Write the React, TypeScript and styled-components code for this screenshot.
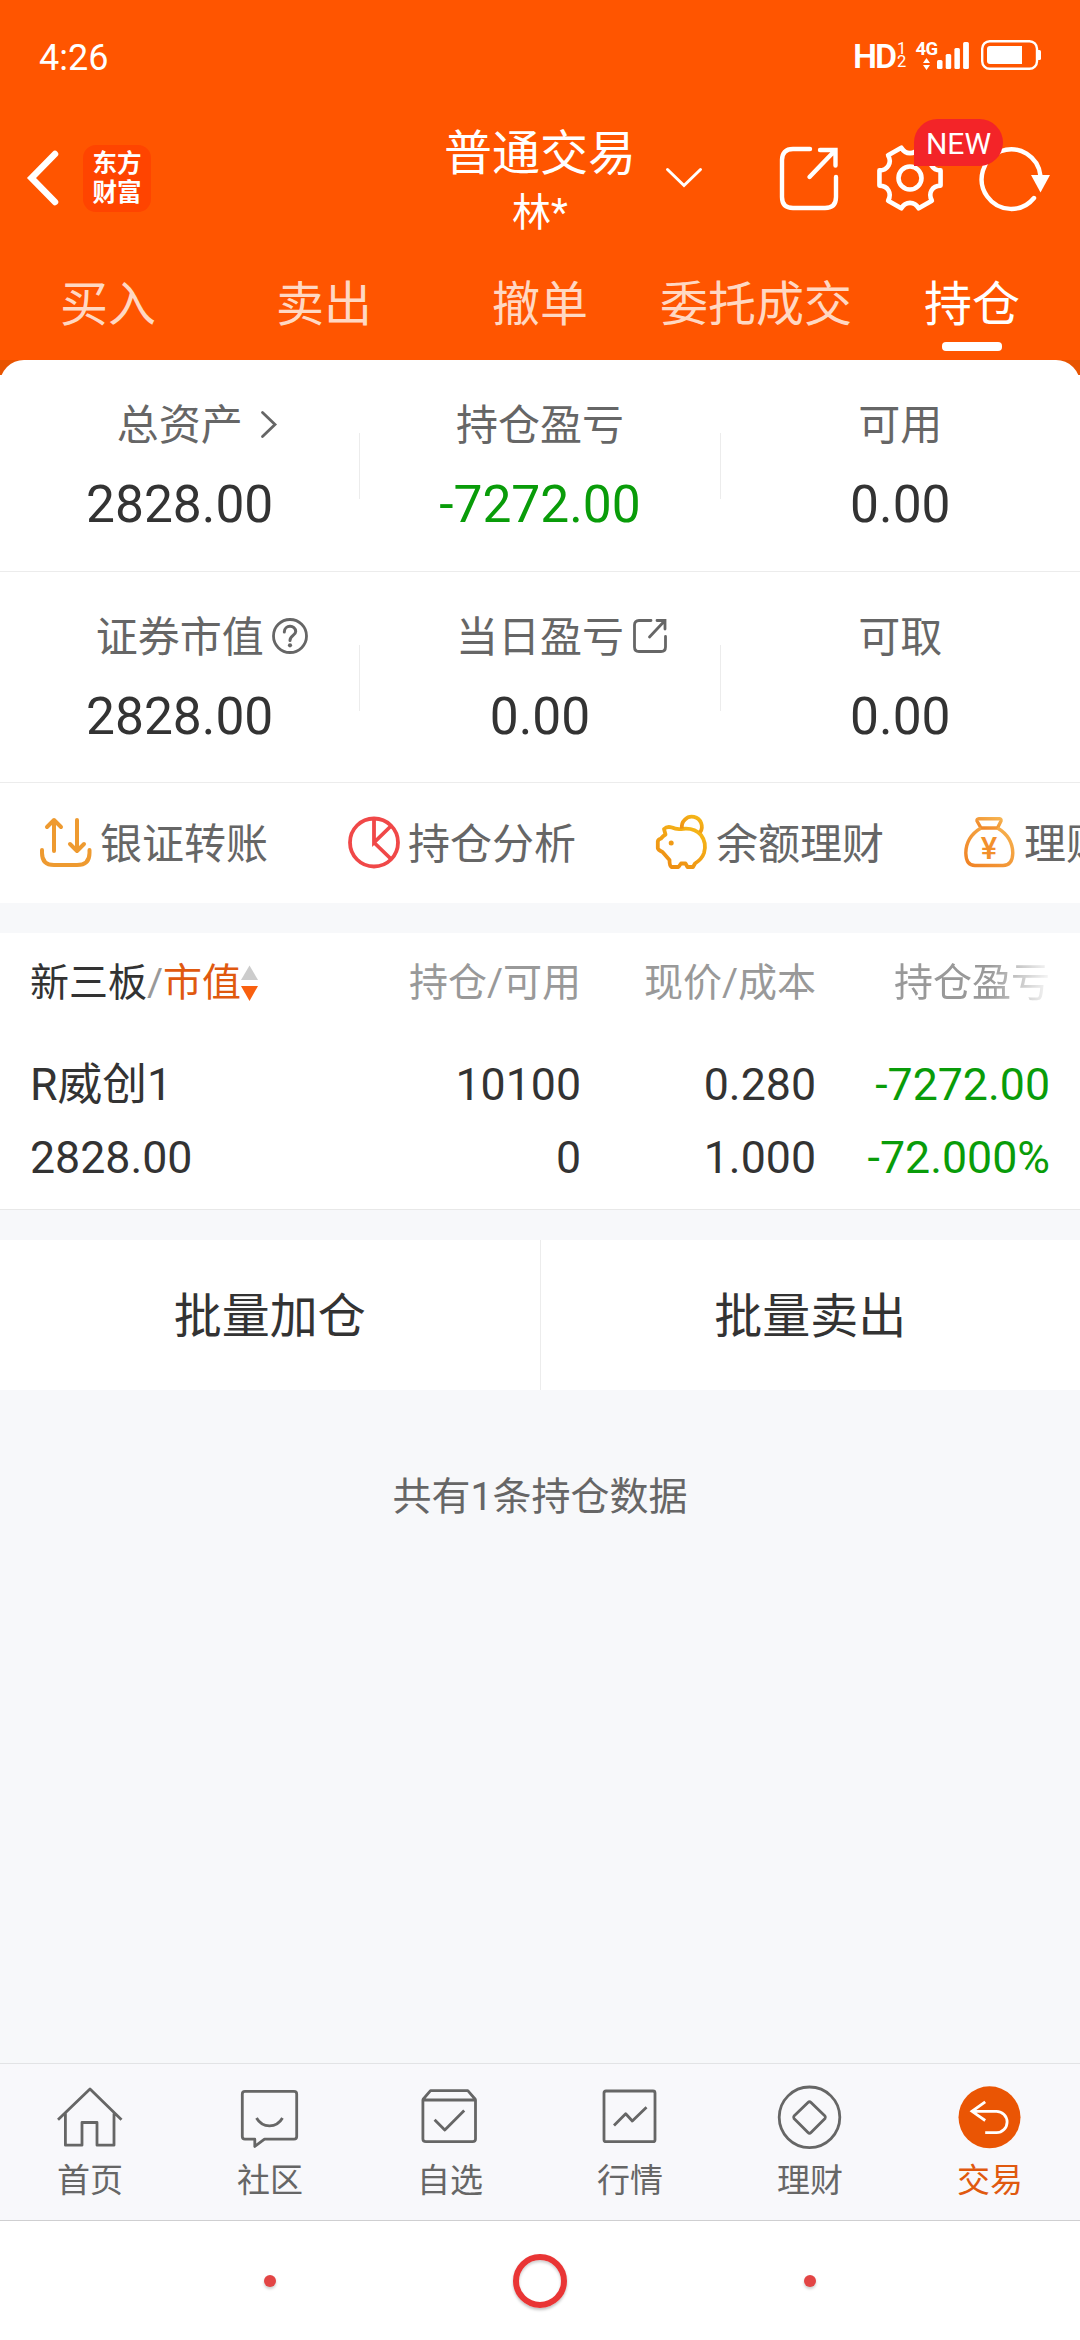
import React from 'react';
import styled, { createGlobalStyle } from 'styled-components';

const GlobalStyle = createGlobalStyle`
  * { box-sizing: border-box; }
  body {
    margin: 0;
    background: #f7f8fa;
    font-family: Roboto, "Noto Sans CJK SC", sans-serif;
    color: #333;
  }
  svg { display: block; flex: none; overflow: visible; }
`;

const Screen = styled.div`
  width: 1080px;
  height: 2340px;
  display: flex;
  flex-direction: column;
  overflow: hidden;
  background: #f7f8fa;
`;

/* ---------- header ---------- */

const Header = styled.header`
  height: 360px;
  background: #ff5500;
  color: #fff;
`;

const StatusBar = styled.div`
  height: 112px;
  padding: 0 39px 0 39px;
  display: flex;
  align-items: center;
  justify-content: space-between;
`;

const Clock = styled.span`
  font-size: 36px;
  line-height: 42px;
  padding-top: 3px;
`;

const StatusIcons = styled.div`
  display: flex;
  align-items: flex-start;
  height: 32px;
`;

const HdMark = styled.span`
  font-size: 34px;
  line-height: 32px;
  font-weight: 600;
  letter-spacing: -2px;
  width: 44px;
`;

const SimSlots = styled.span`
  display: flex;
  flex-direction: column;
  font-size: 16.5px;
  line-height: 12.5px;
  width: 19px;
  padding-top: 3px;
`;

const Network = styled.span`
  width: 21px;
  font-size: 18.5px;
  line-height: 18px;
  font-weight: 700;
  letter-spacing: -0.5px;
  display: flex;
  flex-direction: column;
  align-items: center;
`;

const TitleBar = styled.div`
  height: 132px;
  display: grid;
  grid-template-columns: 1fr auto 1fr;
  align-items: center;
`;

const TitleLeft = styled.div`
  display: flex;
  align-items: center;
  gap: 24px;
  padding-left: 27px;
`;

const AppLogo = styled.div`
  width: 68px;
  height: 67px;
  padding: 2px 9px 0;
  border-radius: 13px;
  background: #ff4400;
  font-family: "Noto Sans CJK SC", sans-serif;
  font-size: 24.5px;
  line-height: 29px;
  font-weight: 700;
  text-align: center;
  word-break: break-all;
`;

const TitleText = styled.div`
  display: flex;
  flex-direction: column;
  align-items: center;
  gap: 6px;
  padding-top: 4px;
`;

const Title = styled.h1`
  margin: 0;
  font-size: 48px;
  line-height: 60px;
  font-weight: 400;
`;

const Account = styled.span`
  font-size: 39px;
  line-height: 46px;
`;

const TitleRight = styled.div`
  display: flex;
  align-items: center;
  padding: 0 30px;
`;

const Actions = styled.div`
  display: flex;
  gap: 36px;
  margin-left: auto;
`;

const BadgeAnchor = styled.div`
  position: relative;
`;

const NewBadge = styled.span`
  position: absolute;
  z-index: 1;
  left: 38px;
  top: -27px;
  width: 89px;
  height: 47px;
  border-radius: 24px 24px 24px 0;
  background: #f32428;
  font-size: 30px;
  line-height: 49px;
  text-align: center;
`;

const Tabs = styled.nav`
  display: grid;
  grid-template-columns: repeat(5, 1fr);
  height: 116px;
`;

const Tab = styled.div<{ $active?: boolean }>`
  display: flex;
  flex-direction: column;
  align-items: center;
  padding-top: 29px;
  font-size: 48px;
  line-height: 64px;
  white-space: nowrap;
  color: ${(p) => (p.$active ? '#fff' : '#ffd8c3')};
`;

const TabMark = styled.span`
  width: 60px;
  height: 9px;
  margin-top: 5px;
  border-radius: 4px;
  background: #fff;
`;

/* ---------- asset summary ---------- */

const SummaryBack = styled.div`
  background: linear-gradient(#e85400 15px, #fff 15px);
`;

const Summary = styled.section`
  background: #fff;
  border-radius: 24px 24px 0 0;
`;

const StatRow = styled.div<{ $height: number }>`
  display: flex;
  height: ${(p) => p.$height}px;
  border-bottom: 1px solid #ececec;
`;

const Stat = styled.div`
  flex: 1;
  display: flex;
  flex-direction: column;
  gap: 24px;
  padding-top: 41px;
`;

const StatDivider = styled.span`
  width: 1px;
  height: 66px;
  margin-top: 73px;
  background: #ececec;
`;

const StatLabel = styled.div`
  display: grid;
  grid-template-columns: 1fr auto 1fr;
  align-items: center;
  font-size: 42px;
  line-height: 50px;
  height: 50px;
  color: #666;
`;

const LabelIcon = styled.span<{ $gap: number }>`
  grid-column: 3;
  padding-left: ${(p) => p.$gap}px;
  padding-bottom: 4px;
`;

const LabelText = styled.span`
  grid-column: 2;
`;

const StatValue = styled.div<{ $loss?: boolean }>`
  font-size: 51.5px;
  line-height: 60px;
  text-align: center;
  color: ${(p) => (p.$loss ? '#099c09' : '#333')};
`;

const QuickRow = styled.div`
  display: flex;
  height: 120px;
  padding-left: 40px;
  overflow: hidden;
`;

const Quick = styled.div`
  flex: none;
  width: 308px;
  display: flex;
  align-items: center;
  gap: 8px;
  font-size: 42px;
  line-height: 52px;
  color: #666;
  white-space: nowrap;
`;

const QuickLabel = styled.span`
  padding-top: 4px;
`;

/* ---------- holdings ---------- */

const Holdings = styled.section`
  margin-top: 30px;
  height: 277px;
  background: #fff;
  border-bottom: 1px solid #e8e8e8;
`;

const HoldingGrid = styled.div`
  display: grid;
  grid-template-columns: 316px 235px 235px 234px;
  padding: 0 30px;
  white-space: nowrap;
`;

const HoldingHead = styled(HoldingGrid)`
  height: 99px;
  align-items: center;
  font-size: 39px;
  line-height: 50px;
  color: #999;
`;

const HoldingBody = styled(HoldingGrid)`
  padding-top: 17px;
  font-size: 44.7px;
  line-height: 73px;
`;

const Cell = styled.div<{ $right?: boolean; $loss?: boolean }>`
  text-align: ${(p) => (p.$right ? 'right' : 'left')};
  color: ${(p) => (p.$loss ? '#099c09' : 'inherit')};
`;

const FadedCell = styled(Cell)`
  mask-image: linear-gradient(to right, #000 74%, transparent 102%);
`;

const SortCell = styled.div`
  display: flex;
  align-items: center;
`;

const Board = styled.span`
  color: #333;
`;

const SortKey = styled.span`
  color: #e0590f;
`;

const BatchRow = styled.div`
  margin-top: 30px;
  height: 150px;
  display: flex;
  background: #fff;
`;

const BatchButton = styled.button`
  flex: 1;
  border: 0;
  padding: 3px 0 0;
  background: none;
  font-family: inherit;
  font-size: 48px;
  line-height: 60px;
  color: #333;
  & + & { border-left: 1px solid #ececec; }
`;

const Footnote = styled.p`
  margin: 82px 0 0;
  font-size: 39px;
  line-height: 50px;
  text-align: center;
  color: #666;
`;

/* ---------- bottom ---------- */

const BottomBar = styled.nav`
  margin-top: auto;
  height: 158px;
  display: grid;
  grid-template-columns: repeat(6, 1fr);
  background: #f8f8fb;
  border-top: 1px solid #e2e3e5;
  border-bottom: 1px solid #cfcfd1;
`;

const BottomItem = styled.div<{ $active?: boolean }>`
  display: flex;
  flex-direction: column;
  align-items: center;
  gap: 11px;
  padding-top: 20px;
  font-size: 33px;
  line-height: 40px;
  color: ${(p) => (p.$active ? '#e0590f' : '#666')};
`;

const SystemNav = styled.div`
  height: 119px;
  display: flex;
  align-items: center;
  justify-content: space-between;
  padding: 0 264px;
  background: #fff;
`;

const Dot = styled.span`
  width: 12px;
  height: 12px;
  margin-top: 1px;
  border-radius: 50%;
  background: #e34545;
  box-shadow: 0 2px 3px rgba(0, 0, 0, 0.2);
`;

const HomeRing = styled.span`
  width: 54px;
  height: 54px;
  border: 6px solid #e93535;
  border-radius: 50%;
  box-shadow: 0 2px 3px rgba(0, 0, 0, 0.25), inset 0 2px 3px rgba(0, 0, 0, 0.2);
`;

/* ---------- icons ---------- */

const gearPath = (() => {
  const point = (deg: number, r: number) => {
    const a = (deg * Math.PI) / 180;
    return `${(34 + r * Math.cos(a)).toFixed(2)} ${(32 + r * Math.sin(a)).toFixed(2)}`;
  };
  let d = `M${point(-14, 31.5)}`;
  for (let k = 0; k < 6; k += 1) {
    const c = k * 60;
    d += `L${point(c + 14, 31.5)}C${point(c + 19, 23.5)} ${point(c + 41, 23.5)} ${point(c + 46, 31.5)}`;
  }
  return `${d}Z`;
})();

const BackIcon = () => (
  <svg width="32" height="56" viewBox="0 0 32 56" fill="none" stroke="#fff" strokeWidth="6.500" strokeLinecap="round">
    <path d="M28 4 4.500 28 28 52" />
  </svg>
);

const DropIcon = () => (
  <svg width="36" height="20" viewBox="0 0 36 20" fill="none" stroke="#fff" strokeWidth="3" strokeLinecap="round">
    <path d="M1.5 1.5 18 17.5 34.5 1.5" />
  </svg>
);

const ShareIcon = () => (
  <svg width="61" height="64" viewBox="0 0 61 64" fill="none" stroke="#fff" strokeWidth="4.4" strokeLinecap="round">
    <path d="M31 3H14Q3 3 3 14V51Q3 62 14 62H46Q57 62 57 51V31M41 4H56.5V19.500M56 4.500 30.500 31" />
  </svg>
);

const GearIcon = () => (
  <svg width="68" height="64" viewBox="0 0 68 64" fill="none" stroke="#fff" strokeWidth="4.6" strokeLinejoin="round">
    <path d={gearPath} />
    <circle cx="34" cy="32" r="11.500" />
  </svg>
);

const RefreshIcon = () => (
  <svg width="70" height="64" viewBox="0 0 70 64" fill="none" stroke="#fff" strokeWidth="4.4" strokeLinecap="round">
    <path d="M60.500 30A29.500 29.800 0 1 0 54 52" />
    <path d="M51 29H70L60.500 46.500Z" fill="#fff" stroke="none" />
  </svg>
);

const DataArrows = () => (
  <svg width="7" height="12" viewBox="0 0 7 12" fill="#fff">
    <path d="M3.500 0 7 5H0ZM3.500 12 0 7H7Z" />
  </svg>
);

const SignalBars = () => (
  <svg width="44" height="32" viewBox="0 0 44 32" fill="#fff">
    <rect x="0" y="20" width="5.500" height="9" rx="1.500" />
    <rect x="8.700" y="14" width="5.500" height="15" rx="1.500" />
    <rect x="17.400" y="8" width="5.500" height="21" rx="1.500" />
    <rect x="26.100" y="2" width="5.800" height="27" rx="1.500" />
  </svg>
);

const BatteryIcon = () => (
  <svg width="60" height="30" viewBox="0 0 60 30">
    <rect x="1.200" y="1.200" width="54.800" height="27.600" rx="7.500" fill="none" stroke="#fff" strokeWidth="2.400" />
    <path d="M9 6H41V24H9Q6 24 6 21V9Q6 6 9 6Z" fill="#fff" />
    <path d="M57 10h1.500q1.500 0 1.500 1.500v7q0 1.500-1.500 1.500H57Z" fill="#fff" />
  </svg>
);

const ChevronIcon = () => (
  <svg width="16" height="27" viewBox="0 0 16 27" fill="none" stroke="#666" strokeWidth="2.800" strokeLinecap="round">
    <path d="M1.500 1.500 14 13.500 1.500 25.500" />
  </svg>
);

const HelpIcon = () => (
  <svg width="36" height="36" viewBox="0 0 36 36" fill="none" stroke="#666" strokeWidth="2.800" strokeLinecap="round">
    <circle cx="18" cy="18" r="16.500" />
    <path d="M12.300 14C12.300 6.500 23.700 6.500 23.700 13.500C23.700 17.500 18 17.500 18 22.500" strokeWidth="3" />
    <circle cx="18" cy="27.300" r="2.100" fill="#666" stroke="none" />
  </svg>
);

const OpenIcon = () => (
  <svg width="34" height="34" viewBox="0 0 34 34" fill="none" stroke="#666" strokeWidth="2.800" strokeLinecap="round">
    <path d="M18 1.500H6Q1.500 1.500 1.500 6V28Q1.500 32.500 6 32.500H28Q32.500 32.500 32.500 28V17.500M24 1.500H32V10M31.500 2 16.500 18" />
  </svg>
);

const TransferIcon = () => (
  <svg width="52" height="52" viewBox="0 0 52 52" fill="none" stroke="#ee9a30" strokeWidth="4" strokeLinecap="round" strokeLinejoin="round">
    <path d="M14 34V3M7 10 14 3 21 10M37 3V34M30 27 37 34 44 27M2 33V36Q2 48 14 48H37Q49.500 48 49.500 36V33" />
  </svg>
);

const AnalysisIcon = () => (
  <svg width="52" height="52" viewBox="0 0 52 52" fill="none" stroke="#f04848" strokeWidth="3.800">
    <circle cx="26" cy="25.500" r="24" />
    <path d="M26 1.500V25.500L43 9M26 25.500 43 42" />
  </svg>
);

const PiggyIcon = () => (
  <svg width="52" height="52" viewBox="0 0 52 52" fill="none" stroke="url(#pig)" strokeWidth="3.800" strokeLinejoin="round">
    <defs>
      <linearGradient id="pig" x1="1" y1="0" x2="0.300" y2="1">
        <stop offset="0" stopColor="#f6bb18" />
        <stop offset="1" stopColor="#ee8f14" />
      </linearGradient>
    </defs>
    <path d="M8 12Q11 9 16 10.500Q20 12.500 25 12Q38 10 45 18Q51 26 48 36Q46 42 39 46.500L37 50H31.500L29.500 46.500H25L22.500 50H15.500Q13.500 49 13.500 43L6.500 35Q2 33 1.800 31V24.500Q2 22.500 5 21.500Q7 19 9.500 17.500Z" />
    <path d="M26 11.500A10 10 0 1 1 44 15.500" />
    <circle cx="15.200" cy="26" r="2.500" fill="#f09a15" stroke="none" />
  </svg>
);

const YenMark = styled.text`
  font-family: Roboto, sans-serif;
  font-size: 31px;
  font-weight: 500;
`;

const BagIcon = () => (
  <svg width="52" height="52" viewBox="0 0 52 52" fill="none" stroke="url(#bag)" strokeWidth="3.400" strokeLinejoin="round">
    <defs>
      <linearGradient id="bag" x1="1" y1="0" x2="0" y2="1">
        <stop offset="0" stopColor="#f6b350" />
        <stop offset="1" stopColor="#f08224" />
      </linearGradient>
    </defs>
    <path d="M15 1.800H35.500Q37.500 2 37 4L33.500 11H17L13 4Q12.500 2 15 1.800Z" />
    <path d="M17 11Q2 20 1.800 36Q2 48.500 11 48.500H39Q48.500 48.500 48.800 36Q48.500 20 33.500 11" />
    <YenMark x="25" y="42" textAnchor="middle" fill="#f2902c" stroke="none">¥</YenMark>
  </svg>
);

const SortArrows = () => (
  <svg width="17" height="36" viewBox="0 0 17 36">
    <path d="M8.500 0.500 17 15H0Z" fill="#ccc" />
    <path d="M8.500 36 0 21H17Z" fill="#f9600f" />
  </svg>
);

const NavIcon = ({ children }: { children: React.ReactNode }) => (
  <svg width="66" height="66" viewBox="0 0 66 66" fill="none" stroke="#666" strokeWidth="2.800" strokeLinejoin="round">
    {children}
  </svg>
);

const bottomItems: { label: string; active?: boolean; icon: React.ReactNode }[] = [
  {
    label: '首页',
    icon: <path d="M1 35.800 33 5 64.500 35.800M8.400 29.500V61.200H25V38.500H40V61.200H57V29.500" />,
  },
  {
    label: '社区',
    icon: (
      <path d="M8 7.300H57Q59.700 7.300 59.700 10V52.500Q59.700 55.200 57 55.200H27.500L17.800 62.500V55.200H8Q5.300 55.200 5.300 52.500V10Q5.300 7.300 8 7.300ZM19.500 34Q24 41.800 32.500 41.800T45.500 34" />
    ),
  },
  {
    label: '自选',
    icon: (
      <path d="M5.900 16H58.500V55Q58.500 57.700 55.500 57.700H9Q5.900 57.700 5.900 55ZM5.900 15.500 13.500 6.700H50.800L58.500 15.500M17.600 35.700 27.800 46 47.200 26.500" />
    ),
  },
  {
    label: '行情',
    icon: (
      <path d="M9 7H56Q58 7 58 9V55.700Q58 57.700 56 57.700H9Q7 57.700 7 55.700V9Q7 7 9 7ZM17 41.500 28.700 29.700 35.300 37 49.500 23.300" />
    ),
  },
  {
    label: '理财',
    icon: (
      <>
        <circle cx="32.500" cy="33.300" r="30.300" />
        <path d="M31 18.500Q32.500 17 34 18.500L48 32Q49 33.300 48 34.600L34 48.500Q32.500 50 31 48.500L17 34.600Q16 33.300 17 32Z" />
      </>
    ),
  },
  {
    label: '交易',
    active: true,
    icon: (
      <>
        <circle cx="32.500" cy="33.300" r="31" fill="#ea5504" stroke="none" />
        <path d="M28.200 17.800 15 27.300 28.200 36.500M15 27.300H39.500A10.600 10.700 0 0 1 39.500 48.700H28.200" stroke="#fff" strokeLinejoin="miter" />
      </>
    ),
  },
];

type StatData = { label: string; value: string; loss?: boolean; icon?: React.ReactNode; gap?: number };

const statRows: { height: number; items: StatData[] }[] = [
  {
    height: 212,
    items: [
      { label: '总资产', value: '2828.00', icon: <ChevronIcon />, gap: 18 },
      { label: '持仓盈亏', value: '-7272.00', loss: true },
      { label: '可用', value: '0.00' },
    ],
  },
  {
    height: 211,
    items: [
      { label: '证券市值', value: '2828.00', icon: <HelpIcon />, gap: 8 },
      { label: '当日盈亏', value: '0.00', icon: <OpenIcon />, gap: 9 },
      { label: '可取', value: '0.00' },
    ],
  },
];

const quickItems = [
  { label: '银证转账', icon: <TransferIcon /> },
  { label: '持仓分析', icon: <AnalysisIcon /> },
  { label: '余额理财', icon: <PiggyIcon /> },
  { label: '理财', icon: <BagIcon /> },
];

export default function App() {
  return (
    <Screen>
      <GlobalStyle />
      <Header>
        <StatusBar>
          <Clock>4:26</Clock>
          <StatusIcons>
            <HdMark>HD</HdMark>
            <SimSlots>
              <span>1</span>
              <span>2</span>
            </SimSlots>
            <Network>
              4G
              <DataArrows />
            </Network>
            <SignalBars />
            <BatteryIcon />
          </StatusIcons>
        </StatusBar>
        <TitleBar>
          <TitleLeft>
            <BackIcon />
            <AppLogo>东方财富</AppLogo>
          </TitleLeft>
          <TitleText>
            <Title>普通交易</Title>
            <Account>林*</Account>
          </TitleText>
          <TitleRight>
            <DropIcon />
            <Actions>
              <ShareIcon />
              <BadgeAnchor>
                <GearIcon />
                <NewBadge>NEW</NewBadge>
              </BadgeAnchor>
              <RefreshIcon />
            </Actions>
          </TitleRight>
        </TitleBar>
        <Tabs>
          <Tab>买入</Tab>
          <Tab>卖出</Tab>
          <Tab>撤单</Tab>
          <Tab>委托成交</Tab>
          <Tab $active>
            持仓
            <TabMark />
          </Tab>
        </Tabs>
      </Header>

      <SummaryBack>
        <Summary>
          {statRows.map((row) => (
            <StatRow key={row.height} $height={row.height}>
              {row.items.map((item, i) => (
                <React.Fragment key={item.label}>
                  {i > 0 && <StatDivider />}
                  <Stat>
                    <StatLabel>
                      <LabelText>{item.label}</LabelText>
                      {item.icon && <LabelIcon $gap={item.gap ?? 0}>{item.icon}</LabelIcon>}
                    </StatLabel>
                    <StatValue $loss={item.loss}>{item.value}</StatValue>
                  </Stat>
                </React.Fragment>
              ))}
            </StatRow>
          ))}
          <QuickRow>
            {quickItems.map((q) => (
              <Quick key={q.label}>
                {q.icon}
                <QuickLabel>{q.label}</QuickLabel>
              </Quick>
            ))}
          </QuickRow>
        </Summary>
      </SummaryBack>

      <Holdings>
        <HoldingHead>
          <SortCell>
            <Board>新三板</Board>/<SortKey>市值</SortKey>
            <SortArrows />
          </SortCell>
          <Cell $right>持仓/可用</Cell>
          <Cell $right>现价/成本</Cell>
          <FadedCell $right>持仓盈亏</FadedCell>
        </HoldingHead>
        <HoldingBody>
          <Cell>R威创1</Cell>
          <Cell $right>10100</Cell>
          <Cell $right>0.280</Cell>
          <Cell $right $loss>-7272.00</Cell>
          <Cell>2828.00</Cell>
          <Cell $right>0</Cell>
          <Cell $right>1.000</Cell>
          <Cell $right $loss>-72.000%</Cell>
        </HoldingBody>
      </Holdings>

      <BatchRow>
        <BatchButton>批量加仓</BatchButton>
        <BatchButton>批量卖出</BatchButton>
      </BatchRow>
      <Footnote>共有1条持仓数据</Footnote>

      <BottomBar>
        {bottomItems.map((item) => (
          <BottomItem key={item.label} $active={item.active}>
            <NavIcon>{item.icon}</NavIcon>
            {item.label}
          </BottomItem>
        ))}
      </BottomBar>
      <SystemNav>
        <Dot />
        <HomeRing />
        <Dot />
      </SystemNav>
    </Screen>
  );
}
